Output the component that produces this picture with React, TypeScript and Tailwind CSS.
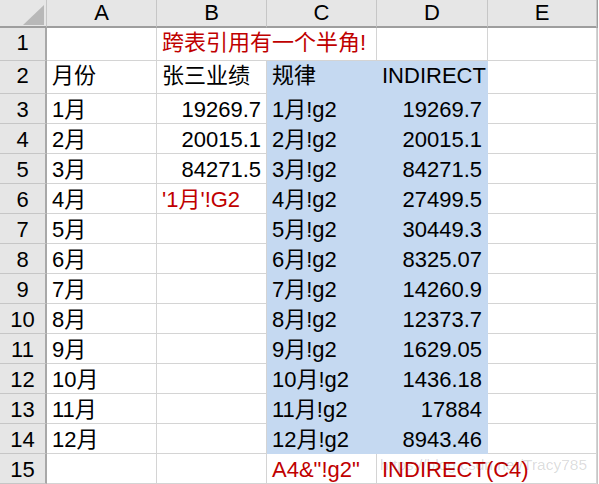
import React from 'react';

const FONT = { fontFamily: '"Liberation Sans", "Noto Sans CJK SC", sans-serif' };

type Cell = { text?: string; right?: boolean; red?: boolean; fill?: boolean; noRight?: boolean };

const cols = ['A', 'B', 'C', 'D', 'E'];

const values = ['19269.7', '20015.1', '84271.5', '27499.5', '30449.3', '8325.07', '14260.9', '12373.7', '1629.05', '1436.18', '17884', '8943.46'];

const buildRows = (): Cell[][] => {
    const rows: Cell[][] = [];
    rows.push([{}, { text: '跨表引用有一个半角!', red: true, noRight: true }, {}, {}, {}]);
    rows.push([
        { text: '月份' },
        { text: '张三业绩' },
        { text: '规律', fill: true },
        { text: 'INDIRECT', fill: true },
        {},
    ]);
    for (let i = 0; i < 12; i++) {
        const m = `${i + 1}月`;
        let b: Cell = {};
        if (i < 3) b = { text: values[i], right: true };
        if (i === 3) b = { text: "'1月'!G2", red: true };
        rows.push([
            { text: m },
            b,
            { text: `${m}!g2`, fill: true },
            { text: values[i], right: true, fill: true },
            {},
        ]);
    }
    rows.push([{}, {}, { text: 'A4&"!g2"', red: true }, { text: 'INDIRECT(C4)', red: true, noRight: true }, {}]);
    return rows;
};

const rowHeights = [33, 33, 30, 30, 30, 30, 30, 30, 30, 30, 30, 30, 30, 30, 30];

export default function App() {
    const rows = buildRows();

    return (
        <div className="relative w-[599px] h-[484px] overflow-hidden bg-white text-[22px] text-black" style={FONT}>
            <div
                className="grid"
                style={{
                    gridTemplateColumns: '47px 110px 110px 110px 111px 109px 2px',
                    gridTemplateRows: `28px ${rowHeights.map((h) => `${h}px`).join(' ')}`,
                }}
            >
                {/* header row */}
                <div className="relative bg-[#e6e6e6] border-r border-b-2 border-r-[#c6c6c6] border-b-[#9e9e9e]">
                    <svg className="absolute left-[23px] top-[5px]" width="21" height="20" viewBox="0 0 21 20">
                        <polygon points="21,0 21,20 0,20" fill="#b8b8b8" />
                    </svg>
                </div>
                {cols.map((c) => (
                    <div
                        key={c}
                        className="flex items-end justify-center pb-[1px] leading-[24px] bg-[#e6e6e6] border-r border-b-2 border-r-[#c6c6c6] border-b-[#9e9e9e]"
                    >
                        {c}
                    </div>
                ))}
                <div className="bg-white border-l border-l-[#9e9e9e]" />

                {rows.map((row, r) => (
                    <React.Fragment key={r}>
                        <div
                            className={`flex items-end justify-center leading-[24px] bg-[#e6e6e6] border-r-2 border-b border-r-[#a8a8a8] border-b-[#c6c6c6] ${
                                rowHeights[r] > 30 ? 'pb-[5px]' : 'pb-[1px]'
                            }`}
                        >
                            {r + 1}
                        </div>
                        {row.map((cell, c) => {
                            const fill = cell.fill;
                            return (
                                <div
                                    key={c}
                                    className={`relative flex items-end whitespace-nowrap leading-[24px] px-[5px] border-b ${
                                        rowHeights[r] > 30 ? 'pb-[5px]' : 'pb-[1px]'
                                    } ${cell.right ? 'justify-end' : 'justify-start'} ${
                                        fill ? 'bg-[#c5d9f1] border-[#c5d9f1]' : 'border-[#d4d4d4]'
                                    } ${cell.noRight ? 'z-10' : 'border-r'} ${cell.red ? 'text-[#c00000]' : ''}`}
                                >
                                    {cell.text}
                                </div>
                            );
                        })}
                        <div className="bg-white border-l border-l-[#c6c6c6]" />
                    </React.Fragment>
                ))}
            </div>

            {/* watermark */}
            <div
                className="absolute left-[380px] top-[455px] text-[15.5px] leading-[20px] text-black/15 pointer-events-none z-20"
                style={FONT}
            >
                https://blog.csdn.net/Tracy785
            </div>
        </div>
    );
}
